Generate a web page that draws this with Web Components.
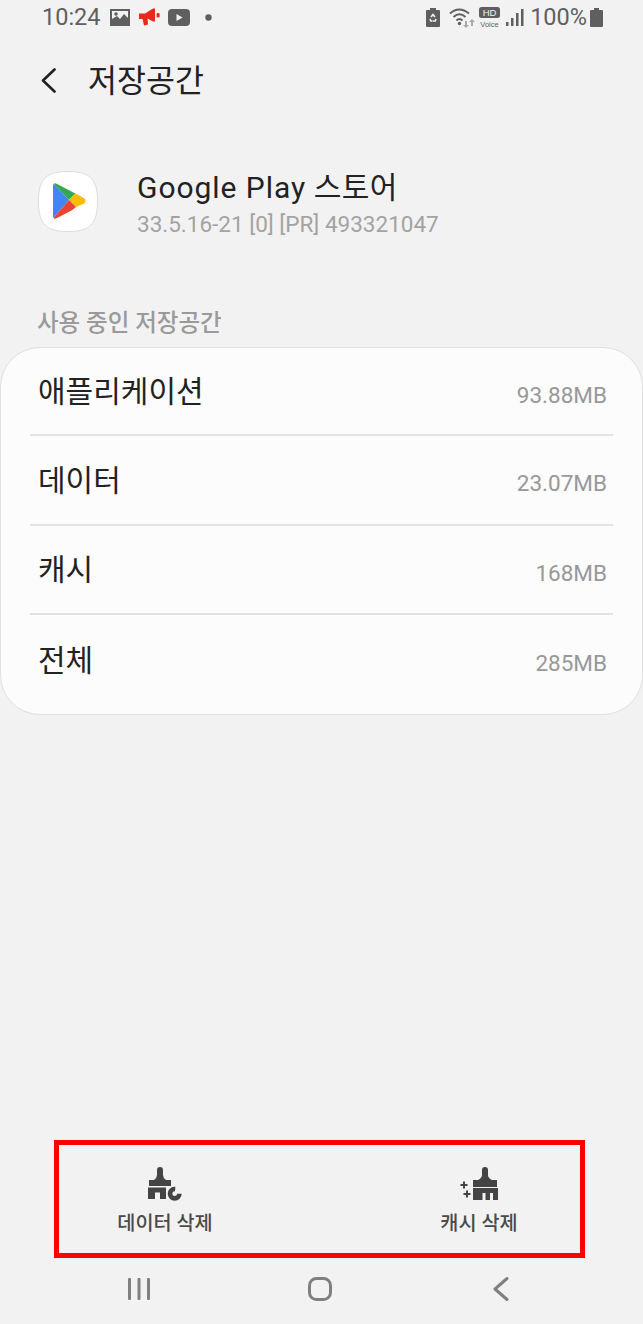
<!DOCTYPE html>
<html lang="ko">
<head>
<meta charset="utf-8">
<title>저장공간</title>
<style>
  html, body { margin: 0; padding: 0; background: #f2f2f2; }
  body { font-family: Roboto, "Noto Sans CJK KR", sans-serif; }
</style>
</head>
<body>
<storage-screen>
  <status-bar slot="top"></status-bar>
  <app-bar slot="top" text="저장공간"></app-bar>
  <app-summary slot="top" brand="Google Play" name="스토어" version="33.5.16-21 [0] [PR] 493321047"></app-summary>
  <section-label slot="top">사용 중인 저장공간</section-label>
  <storage-card slot="top">
    <storage-row label="애플리케이션" value="93.88MB"></storage-row>
    <storage-row label="데이터" value="23.07MB"></storage-row>
    <storage-row label="캐시" value="168MB"></storage-row>
    <storage-row label="전체" value="285MB" last></storage-row>
  </storage-card>
  <action-bar slot="bottom">
    <action-button icon="data">데이터 삭제</action-button>
    <action-button icon="cache">캐시 삭제</action-button>
  </action-bar>
  <nav-bar slot="bottom"></nav-bar>
</storage-screen>

<script>
const FONT = 'Roboto, "Noto Sans CJK KR", sans-serif';

// Whole page: content on top, actions and nav pinned to the bottom
class StorageScreen extends HTMLElement {
  constructor() {
    super();
    this.attachShadow({ mode: 'open' });
    this.shadowRoot.innerHTML = `
      <style>
        :host {
          display: flex;
          flex-direction: column;
          justify-content: space-between;
          height: 1324px;
          overflow: hidden;
          font-family: ${FONT};
          background: #f2f2f2;
        }
        div { display: flex; flex-direction: column; }
      </style>
      <div><slot name="top"></slot></div>
      <div><slot name="bottom"></slot></div>
      `;
  }
}

class StatusBar extends HTMLElement {
  constructor() {
    super();
    this.attachShadow({ mode: 'open' });
    this.shadowRoot.innerHTML = `
      <style>
        :host {
          display: flex;
          align-items: center;
          box-sizing: border-box;
          height: 34px;
          padding: 0 40px 0 42px;
          color: #5f5f5f;
          font-size: 23.5px;
        }
        svg { display: block; flex: none; }
        .left, .right { display: flex; align-items: center; }
        .right { margin-left: auto; }
        .clock { width: 68px; }
        .pct { margin: 0 3px 0 6px; }
      </style>
      <div class="left">
        <span class="clock">10:24</span>
        <svg width="20" height="17" viewBox="0 0 20 17">
          <path fill="#5f5f5f" fill-rule="evenodd" d="M0 0H20V17H0ZM2 2V10L7 7L10 10L14 5L18 9V2Z"/>
          <circle cx="6" cy="5" r="1.8" fill="#5f5f5f"/>
        </svg>
        <svg style="margin-left:9px" width="21" height="18" viewBox="0 0 21 18">
          <path fill="#e8291c" d="M0 5.5H6L14 .5H16V13.5H14L8.5 10.5L9 16.5L5 17.5L3.6 11H0Z"/>
          <rect x="17.6" y="5" width="3" height="4.5" rx="1.2" fill="#e8291c"/>
        </svg>
        <svg style="margin-left:8px" width="22" height="17" viewBox="0 0 22 17">
          <rect width="22" height="17" rx="4" fill="#5f5f5f"/>
          <path fill="#f2f2f2" d="M8.5 5L14.5 8.5L8.5 12Z"/>
        </svg>
        <svg style="margin-left:15px" width="7" height="7" viewBox="0 0 7 7"><circle cx="3.5" cy="3.5" r="3.2" fill="#5f5f5f"/></svg>
      </div>
      <div class="right">
        <svg width="14" height="19" viewBox="0 0 14 19">
          <path fill="#5f5f5f" d="M4 0H10V2H13Q14 2 14 3V18Q14 19 13 19H1Q0 19 0 18V3Q0 2 1 2H4Z"/>
          <path fill="none" stroke="#f2f2f2" stroke-width="1.6" d="M5 9L7 6.5L9 9M10 11L9.3 13H6.5M4 11L4.8 13H6"/>
        </svg>
        <svg style="margin-left:9px" width="26" height="21" viewBox="0 0 26 21">
          <g fill="none" stroke="#5f5f5f" stroke-width="2">
            <path d="M1 6.5Q10 -1.5 20 6.5"/>
            <path d="M4.5 10Q10.500 4.500 16.500 10"/>
            <path d="M7.500 13.500Q10.500 10.500 13.500 13.500"/>
          </g>
          <circle cx="10.500" cy="16.500" r="1.700" fill="#5f5f5f"/>
          <path fill="#aaa" d="M16 14H18V18H20L17 21L14 18H16Z"/>
          <path fill="#aaa" d="M22 20H24V16H26L23 13L20 16H22Z" transform="translate(0 -1)"/>
        </svg>
        <svg style="margin-left:4px" width="22" height="20" viewBox="0 0 22 20">
          <rect width="21" height="11" rx="2.500" fill="#5f5f5f"/>
          <text x="10.500" y="9" text-anchor="middle" font-size="9.500" font-family="Liberation Sans, sans-serif" fill="#f2f2f2">HD</text>
          <text x="10.500" y="19.500" text-anchor="middle" font-size="7.500" font-family="Liberation Sans, sans-serif" fill="#5f5f5f">Voice</text>
        </svg>
        <svg style="margin-left:5px" width="18" height="19" viewBox="0 0 18 19">
          <rect x="0" y="14" width="2.500" height="4" fill="#5f5f5f"/>
          <rect x="5" y="10" width="2.500" height="8" fill="#5f5f5f"/>
          <rect x="10" y="5" width="2.500" height="13" fill="#5f5f5f"/>
          <rect x="15" y="1" width="2.500" height="17" fill="#5f5f5f"/>
        </svg>
        <span class="pct">100%</span>
        <svg width="13" height="19" viewBox="0 0 13 19">
          <path fill="#5f5f5f" d="M4 0H9V2H12Q13 2 13 3V18Q13 19 12 19H1Q0 19 0 18V3Q0 2 1 2H4Z"/>
        </svg>
      </div>
      `;
  }
}

class AppBar extends HTMLElement {
  constructor() {
    super();
    this.attachShadow({ mode: 'open' });
    this.shadowRoot.innerHTML = `
      <style>
        :host {
          display: flex;
          align-items: center;
          box-sizing: border-box;
          height: 92px;
          padding-left: 41px;
          color: #222;
          font-size: 31.500px;
        }
        svg { display: block; flex: none; margin-right: 32px; }
        span { padding-bottom: 4px; }
      </style>
      <svg width="15" height="25" viewBox="0 0 15 25">
        <path fill="none" stroke="#222" stroke-width="2.600" stroke-linecap="round" stroke-linejoin="round" d="M13.500 1.500L2 12.500L13.500 23.500"/>
      </svg>
      <span></span>
      `;
  }

  connectedCallback() {
    this.shadowRoot.querySelector('span').textContent = this.getAttribute('text');
  }
}

class AppSummary extends HTMLElement {
  constructor() {
    super();
    this.attachShadow({ mode: 'open' });
    this.shadowRoot.innerHTML = `
      <style>
        :host {
          display: flex;
          align-items: center;
          gap: 39px;
          box-sizing: border-box;
          height: 166px;
          padding: 0 0 15px 38px;
        }
        svg { display: block; flex: none; }
        .text { padding-top: 5px; }
        .name { color: #222; font-size: 30px; line-height: 38px; letter-spacing: .3px; }
        .brand { letter-spacing: .95px; }
        .version { color: #a3a3a3; font-size: 22.500px; line-height: 31px; margin-top: 2px; }
      </style>
      <svg width="60" height="61" viewBox="0 0 60 61">
        <defs>
          <clipPath id="tri"><path d="M15 15Q15 11 19 13L46 27Q49 30 46 33L19 47Q15 49 15 45Z"/></clipPath>
        </defs>
        <path fill="#fff" stroke="#dcdcdc" d="M30 .5C52 .5 59.500 8 59.500 30C59.500 53 52 60.500 30 60.500C8 60.500 .5 53 .5 30C.5 8 8 .5 30 .5Z"/>
        <g clip-path="url(#tri)">
          <polygon fill="#4285f4" points="12,9 31,29 12,51"/>
          <polygon fill="#34a853" points="12,9 42,9 38,22 31,29"/>
          <polygon fill="#fbbc04" points="38,22 52,30 38,36 31,29"/>
          <polygon fill="#ea4335" points="31,29 38,36 20,52 12,51"/>
        </g>
      </svg>
      <div class="text">
        <div class="name"><span class="brand"></span> <span class="suffix"></span></div>
        <div class="version"></div>
      </div>
      `;
  }

  connectedCallback() {
    this.shadowRoot.querySelector('.brand').textContent = this.getAttribute('brand');
    this.shadowRoot.querySelector('.suffix').textContent = this.getAttribute('name');
    this.shadowRoot.querySelector('.version').textContent = this.getAttribute('version');
  }
}

class SectionLabel extends HTMLElement {
  constructor() {
    super();
    this.attachShadow({ mode: 'open' });
    this.shadowRoot.innerHTML = `
      <style>
        :host {
          display: block;
          box-sizing: border-box;
          height: 55px;
          padding: 15px 0 0 37px;
          color: #9a9a9a;
          font-size: 23.500px;
          line-height: 32px;
          font-weight: 500;
        }
      </style>
      <slot></slot>
      `;
  }
}

class StorageCard extends HTMLElement {
  constructor() {
    super();
    this.attachShadow({ mode: 'open' });
    this.shadowRoot.innerHTML = `
      <style>
        :host {
          display: block;
          box-sizing: border-box;
          height: 368px;
          padding: 0 29px 8px;
          background: #fcfcfc;
          border: 1px solid #e0e0e0;
          border-radius: 40px;
        }
      </style>
      <slot></slot>
      `;
  }
}

class StorageRow extends HTMLElement {
  constructor() {
    super();
    this.attachShadow({ mode: 'open' });
    this.shadowRoot.innerHTML = `
      <style>
        :host {
          display: flex;
          align-items: center;
          justify-content: space-between;
          box-sizing: border-box;
          height: 89.500px;
          padding: 0 6px 0 8px;
          border-bottom: 2px solid #e2e2e2;
        }
        :host(:first-child) { height: 88px; }
        :host([last]) { border-bottom: 0; }
        .label { color: #222; font-size: 30px; padding-bottom: 4px; }
        .value { color: #989898; font-size: 22.500px; padding-top: 7px; }
      </style>
      <span class="label"></span>
      <span class="value"></span>
      `;
  }

  connectedCallback() {
    this.shadowRoot.querySelector('.label').textContent = this.getAttribute('label');
    this.shadowRoot.querySelector('.value').textContent = this.getAttribute('value');
  }
}

class ActionBar extends HTMLElement {
  constructor() {
    super();
    this.attachShadow({ mode: 'open' });
    this.shadowRoot.innerHTML = `
      <style>
        :host {
          display: flex;
          justify-content: space-between;
          box-sizing: border-box;
          height: 118px;
          margin: 0 58px 0 54px;
          padding: 22px 6px 0 11px;
          border: 5px solid #f00;
        }
      </style>
      <slot></slot>
      `;
  }
}

// Brush shapes share the handle and ferrule, only the side mark differs
const BRUSH_ICONS = {
  data: `
    <svg width="34" height="34" viewBox="0 0 34 34">
      <path fill="#444" d="M9 3Q9 0 12 0Q15 0 15 3V8Q15 11 18 13H23V19H1V13H6Q9 11 9 8Z"/>
      <path fill="#444" d="M0 20.500H18V32H12V25.500H7V32H0Z"/>
      <circle cx="26.700" cy="26.700" r="4.700" fill="none" stroke="#444" stroke-width="4.600" stroke-dasharray="22.100 7.400"/>
    </svg>`,
  cache: `
    <svg width="38" height="34" viewBox="0 0 38 34">
      <path fill="#444" d="M22 3Q22 0 25 0Q28 0 28 3V8Q28 11 32 13H37V20H13V13H18Q22 11 22 8Z"/>
      <path fill="#444" d="M13 21H38V33H33V26H30V33H25.500V26H22.500V33H13Z"/>
      <path fill="#444" d="M3 14.500H5V17H7.500V19H5V21.500H3V19H.5V17H3Z"/>
      <path fill="#444" d="M6 23.500H8V26H10.500V28H8V30.500H6V28H3.500V26H6Z"/>
    </svg>`
};

class ActionButton extends HTMLElement {
  constructor() {
    super();
    this.attachShadow({ mode: 'open' });
    this.shadowRoot.innerHTML = `
      <style>
        :host {
          display: flex;
          flex-direction: column;
          align-items: center;
          width: 190px;
          color: #4a4a4a;
          font-size: 19.700px;
          font-weight: 500;
        }
        .icon { height: 34px; margin-bottom: 7px; }
        .icon svg { display: block; }
        .text { line-height: 32px; }
      </style>
      <div class="icon"></div>
      <div class="text"><slot></slot></div>
      `;
  }

  connectedCallback() {
    this.shadowRoot.querySelector('.icon').innerHTML = BRUSH_ICONS[this.getAttribute('icon')];
  }
}

class NavBar extends HTMLElement {
  constructor() {
    super();
    this.attachShadow({ mode: 'open' });
    this.shadowRoot.innerHTML = `
      <style>
        :host {
          display: flex;
          justify-content: center;
          box-sizing: border-box;
          height: 66px;
          padding: 19px 4px 0 0;
        }
        div { width: 181px; display: flex; justify-content: center; }
        svg { display: block; }
      </style>
      <div><svg width="24" height="24" viewBox="0 0 24 24" fill="#808080">
        <rect x="1" y="1" width="3" height="22" rx="1"/>
        <rect x="10.500" y="1" width="3" height="22" rx="1"/>
        <rect x="20" y="1" width="3" height="22" rx="1"/>
      </svg></div>
      <div><svg width="24" height="24" viewBox="0 0 24 24">
        <rect x="1.500" y="1.500" width="21" height="21" rx="7" fill="none" stroke="#808080" stroke-width="3"/>
      </svg></div>
      <div><svg width="16" height="24" viewBox="0 0 16 24">
        <path fill="none" stroke="#808080" stroke-width="3" stroke-linecap="round" stroke-linejoin="round" d="M14 1.500L2 12L14 22.500"/>
      </svg></div>
      `;
  }
}

customElements.define('storage-screen', StorageScreen);
customElements.define('status-bar', StatusBar);
customElements.define('app-bar', AppBar);
customElements.define('app-summary', AppSummary);
customElements.define('section-label', SectionLabel);
customElements.define('storage-card', StorageCard);
customElements.define('storage-row', StorageRow);
customElements.define('action-bar', ActionBar);
customElements.define('action-button', ActionButton);
customElements.define('nav-bar', NavBar);
</script>
</body>
</html>
